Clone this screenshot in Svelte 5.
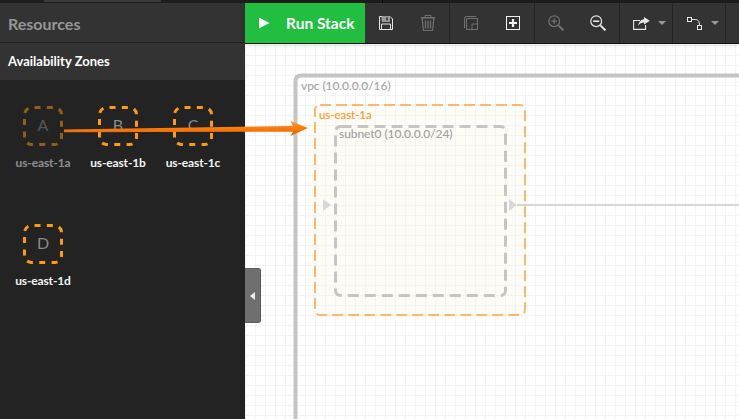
<script>
	const zones = [
		{ letter: 'A', name: 'us-east-1a', used: true },
		{ letter: 'B', name: 'us-east-1b' },
		{ letter: 'C', name: 'us-east-1c' },
		{ letter: 'D', name: 'us-east-1d' }
	];
</script>

<div class="app">
	<div class="topstrip"><span class="tab"></span><span class="tick"></span></div>
	<div class="main">
		<aside class="sidebar">
			<div class="res-head">Resources</div>
			<div class="az-head">Availability Zones</div>
			<div class="zones">
				{#each zones as z}
					<div class="zone" class:used={z.used}>
						<div class="zone-box">
							<svg width="40" height="40" viewBox="0 0 40 40">
								<rect x="1.5" y="1.5" width="37" height="37" rx="7" fill="none" stroke="#ff9c0e" stroke-width="3" stroke-dasharray="6 6.35" stroke-dashoffset="-3" />
							</svg>
							<span class="letter">{z.letter}</span>
						</div>
						<div class="zone-name">{z.name}</div>
					</div>
				{/each}
			</div>
		</aside>

		<div class="content">
			<div class="toolbar">
				<button class="run">
					<svg width="12" height="12" viewBox="0 0 12 12"><path d="M1 0.5 L11.5 6 L1 11.5 Z" fill="#fff" /></svg>
					<span>Run Stack</span>
				</button>
				<div class="group g1">
					<!-- save -->
					<svg class="ic" width="14" height="14" viewBox="0 0 14 14" fill="none" stroke="#e6e6e6" stroke-width="1">
						<path d="M0.5 0.5 H11 L13.5 3 V13.5 H0.5 Z" />
						<path d="M3 0.5 V5.5 H10.5 V0.5 Z" fill="#999" stroke="#999" />
						<path d="M8 1.5 V4.5" stroke="#333" stroke-width="1.5" />
						<path d="M2.5 13.5 V8 H11.5 V13.5" />
					</svg>
					<!-- trash -->
					<svg class="ic off" width="14" height="16" viewBox="0 0 14 16" fill="none" stroke="#e0e0e0" stroke-width="1">
						<path d="M4 2 V0.5 H10 V2" />
						<path d="M0 2.8 H14" stroke-width="1.6" />
						<path d="M1.2 3.5 L2.4 15.5 H11.6 L12.8 3.5" stroke-width="1.2" />
						<path d="M4.5 5.5 V13.5 M7 5.5 V13.5 M9.5 5.5 V13.5" stroke-width="1.3" />
					</svg>
				</div>
				<div class="group g2">
					<!-- copy -->
					<svg class="ic off" width="14" height="14" viewBox="0 0 14 14" fill="none" stroke="#e6e6e6" stroke-width="1">
						<path d="M12 0.5 H2.5 Q0.5 0.5 0.5 2.5 V12" />
						<path d="M2.5 2.5 H13.5 V13.5 H2.5 Z" />
						<path d="M8 8 H13.5 V13.5 H8 Z" />
					</svg>
					<!-- add -->
					<svg class="ic" width="14" height="14" viewBox="0 0 14 14" fill="none" stroke="#f2f2f2">
						<rect x="0.5" y="0.5" width="13" height="13" stroke-width="1" />
						<path d="M3 7 H11 M7 3 V11" stroke-width="2.2" />
					</svg>
				</div>
				<div class="group g3">
					<!-- zoom in -->
					<svg class="ic off" width="16" height="16" viewBox="0 0 16 16" fill="none" stroke="#e6e6e6">
						<circle cx="6.2" cy="6.2" r="5.4" stroke-width="1.2" />
						<path d="M3.4 6.2 H9 M6.2 3.4 V9" stroke-width="1.2" />
						<path d="M10.4 10.4 L15.4 15.4" stroke-width="2" />
					</svg>
					<!-- zoom out -->
					<svg class="ic" width="16" height="16" viewBox="0 0 16 16" fill="none" stroke="#e6e6e6">
						<circle cx="6.2" cy="6.2" r="5.4" stroke-width="1.2" />
						<path d="M3.2 6.2 H9.2" stroke-width="1.6" />
						<path d="M10.4 10.4 L15.4 15.4" stroke-width="2" />
					</svg>
				</div>
				<div class="group g4">
					<!-- export -->
					<svg class="ic" width="17" height="13" viewBox="0 0 17 13" fill="none" stroke="#e6e6e6" stroke-width="1.1">
						<path d="M7 3.5 H0.6 V12.4 H12.6 V8" />
						<path d="M11 0 L16.8 3.8 L11 7.6 V5.6 C8.6 5.6 6.8 6.4 5.2 8.8 C5.6 5 7.8 2.4 11 2.2 Z" fill="#e6e6e6" stroke="none" />
					</svg>
					<span class="caret"></span>
				</div>
				<div class="group g5">
					<!-- line style -->
					<svg class="ic" width="16" height="13" viewBox="0 0 16 13" fill="none" stroke="#e6e6e6" stroke-width="1">
						<rect x="0.5" y="0.5" width="4" height="4" />
						<rect x="10.5" y="8.5" width="4" height="4" />
						<path d="M4.5 2.5 H8.5 C11.2 2.5 12.5 4.6 12.5 8.5" />
					</svg>
					<span class="caret"></span>
				</div>
				<div class="group g6"></div>
			</div>

			<div class="canvas">
				<svg class="diagram" width="494" height="376" viewBox="245 43 494 376">
					<defs>
						<pattern id="grid" x="246" y="45" width="10" height="10" patternUnits="userSpaceOnUse">
							<path d="M0 9.5 H10 M9.5 0 V10" stroke="#f3f3f3" stroke-width="1" fill="none" />
						</pattern>
					</defs>
					<rect x="245" y="43" width="494" height="376" fill="url(#grid)" />

					<!-- vpc -->
					<path d="M739 74.5 H301.5 Q295.5 74.5 295.5 80.5 V419" fill="none" stroke="#c4c4c4" stroke-width="4" />
					<text x="301" y="89" class="t vpc">vpc (10.0.0.0/16)</text>

					<!-- az -->
					<rect x="315" y="104" width="210" height="210" rx="5" fill="#f9f3df" fill-opacity="0.28" stroke="#ffb869" stroke-width="2" stroke-dasharray="11 5" />
					<text x="319" y="118" class="t az">us-east-1a</text>

					<!-- subnet -->
					<rect x="335.5" y="125.5" width="170" height="169" rx="5" fill="none" stroke="#c5c5c5" stroke-width="3" stroke-dasharray="11 6" />
					<text x="339" y="137" class="t subnet">subnet0 (10.0.0.0/24)</text>

					<!-- ports and route -->
					<path d="M323 198 L331 204 L323 210 Z" fill="#d8d8d8" />
					<path d="M509 198 L517 204 L509 210 Z" fill="#d8d8d8" />
					<path d="M517 204 H739" stroke="#d6d6d6" stroke-width="2" fill="none" />
				</svg>
				<button class="collapse" aria-label="Collapse"><span></span></button>
			</div>
		</div>
	</div>

	<svg class="arrow" width="260" height="30" viewBox="60 115 260 30">
		<defs>
			<linearGradient id="shaft" x1="0" y1="0" x2="0" y2="1">
				<stop offset="0" stop-color="#ff9a2a" />
				<stop offset="0.5" stop-color="#fb7a0c" />
				<stop offset="1" stop-color="#dd6405" />
			</linearGradient>
		</defs>
		<path d="M64 129.6 L293 126 L290.5 121 L308 128 L290.5 136 L293 131.8 L64 132.2 Z" fill="url(#shaft)" />
	</svg>
</div>

<style>
	:global(body) {
		margin: 0;
		background: #222;
	}

	.app {
		position: relative;
		width: 739px;
		height: 419px;
		overflow: hidden;
		font-family: Lato, sans-serif;
		display: flex;
		flex-direction: column;
	}

	.topstrip {
		position: relative;
		height: 3px;
		background: #1d1d1d;
		display: flex;
		padding-left: 44px;
	}

	.tab {
		width: 117px;
		height: 2px;
		background: #3a3a3a;
	}

	.tick {
		position: absolute;
		left: 382px;
		top: 0;
		width: 1px;
		height: 3px;
		background: #000;
	}

	.main {
		flex: 1;
		display: flex;
		min-height: 0;
	}

	.sidebar {
		width: 245px;
		flex: none;
		background: #232323;
		display: flex;
		flex-direction: column;
	}

	.res-head {
		height: 39px;
		line-height: 42px;
		padding-left: 8px;
		background: #333;
		color: #969696;
		font-size: 16px;
		font-weight: 700;
		border-bottom: 1px solid #222;
	}

	.az-head {
		height: 37px;
		line-height: 36px;
		padding-left: 8px;
		background: #333;
		color: #fff;
		font-size: 13px;
		font-weight: 700;
		border-bottom: 1px solid #222;
	}

	.zones {
		display: grid;
		grid-template-columns: repeat(3, 75px);
		grid-auto-rows: 118px;
		padding: 25px 0 0 5.5px;
	}

	.zone {
		display: flex;
		flex-direction: column;
		align-items: center;
		width: 75px;
	}

	.zone-box {
		position: relative;
		width: 40px;
		height: 40px;
	}

	.zone-box svg {
		display: block;
	}

	.letter {
		position: absolute;
		inset: 0 0 3px;
		display: flex;
		align-items: center;
		justify-content: center;
		color: #8a8a8a;
		font-size: 16px;
	}

	.zone-name {
		margin-top: 9px;
		color: #f4f4f4;
		font-size: 12px;
		font-weight: 700;
		letter-spacing: -0.15px;
	}

	.zone.used .zone-box,
	.zone.used .zone-name {
		opacity: 0.5;
	}

	.content {
		flex: 1;
		min-width: 0;
		display: flex;
		flex-direction: column;
	}

	.toolbar {
		position: relative;
		z-index: 1;
		flex: none;
		display: flex;
		background: #333;
		border-bottom: 1px solid #111;
		box-sizing: border-box;
		height: 41px;
		box-shadow: 0 1px 6px rgba(0, 0, 0, 0.12);
	}

	.run {
		width: 120px;
		flex: none;
		border: 0;
		padding: 0 0 0 13px;
		background: #20bf3f;
		color: #fff;
		font-family: inherit;
		font-size: 15.5px;
		font-weight: 700;
		display: flex;
		align-items: center;
		gap: 16px;
	}

	.group {
		display: flex;
		align-items: center;
		border-right: 1px solid #232323;
		box-sizing: border-box;
	}

	.g1 { width: 85px; padding-left: 14px; gap: 28px; }
	.g2 { width: 85px; padding-left: 14px; gap: 28px; }
	.g3 { width: 85px; padding-left: 13px; gap: 26px; }
	.g4 { width: 53px; padding-left: 13px; gap: 8px; }
	.g5 { width: 53px; padding-left: 14px; gap: 8px; }
	.g6 { flex: 1; border-right: 0; }

	.ic {
		display: block;
		flex: none;
	}

	.ic.off {
		opacity: 0.35;
	}

	.caret {
		width: 0;
		height: 0;
		border: 4px solid transparent;
		border-top: 4px solid #999;
		border-bottom: 0;
	}

	.canvas {
		position: relative;
		flex: 1;
		min-height: 0;
		background: #fff;
	}

	.diagram {
		display: block;
	}

	.t {
		font-family: Lato, sans-serif;
		font-size: 12px;
		font-weight: 500;
		letter-spacing: -0.08px;
	}

	.vpc {
		fill: #a4a4a4;
	}

	.az {
		fill: #ff9628;
		font-size: 11.5px;
	}

	.subnet {
		fill: #a0a0a0;
	}

	.collapse {
		position: absolute;
		left: 0;
		top: 224px;
		width: 16px;
		height: 55px;
		padding: 0;
		border: 1px solid #5c5c5c;
		border-left: 0;
		border-radius: 0 3px 3px 0;
		background: #6f6f6f;
		display: flex;
		align-items: center;
		justify-content: center;
	}

	.collapse span {
		width: 0;
		height: 0;
		border: 4px solid transparent;
		border-right: 5px solid #eee;
		border-left: 0;
	}

	.arrow {
		position: absolute;
		left: 60px;
		top: 115px;
	}
</style>
